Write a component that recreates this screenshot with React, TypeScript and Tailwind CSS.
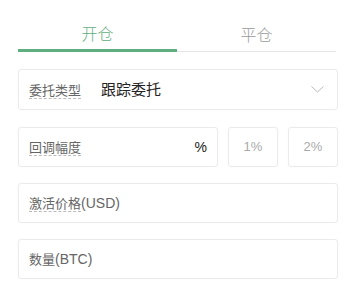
import React from "react";

const Label = ({ text }: { text: string }) => (
  <span className="inline-block text-[13px] leading-[17px] text-[#666] border-b border-dashed border-[#bbb]">
    {text}
  </span>
);

export default function App() {
  return (
    <div className="w-[346px] h-[284px] bg-white font-['Noto_Sans_CJK_SC','Noto_Sans',sans-serif] overflow-hidden">
      <div className="ml-[18px] w-[320px]">
        <div className="flex items-end w-[318px]">
          <div className="flex-1 pt-[21px] pb-[4px] border-b-[3px] border-[#5fae80] text-center text-[16px] leading-[24px] font-light text-[#5fae80]">
            开仓
          </div>
          <div className="flex-1 pt-[21px] pb-[5px] border-b border-[#e6e6e6] text-center text-[16px] leading-[24px] font-light text-[#999]">
            平仓
          </div>
        </div>

        <div className="mt-[17px] h-[41px] rounded-[3px] border border-[#ebebeb] shadow-[0_0_2px_rgba(0,0,0,0.04)] flex items-center pl-[10px] pr-[13px]">
          <Label text="委托类型" />
          <span className="ml-[20px] text-[15px] leading-[18px] text-[#222] pb-[1px]">跟踪委托</span>
          <svg className="ml-auto" width="13" height="7" viewBox="0 0 13 7" fill="none">
            <path d="M0.5 0.5L6.5 6L12.5 0.5" stroke="#bbb" strokeWidth="1" />
          </svg>
        </div>

        <div className="mt-[17px] flex gap-[10px] h-[40px]">
          <div className="w-[200px] rounded-[3px] border border-[#ebebeb] shadow-[0_0_2px_rgba(0,0,0,0.04)] flex items-center pl-[10px] pr-[10px]">
            <Label text="回调幅度" />
            <span className="ml-auto text-[14px] text-[#222] font-['Liberation_Sans',sans-serif]">%</span>
          </div>
          <div className="w-[50px] rounded-[3px] border border-[#ebebeb] shadow-[0_0_2px_rgba(0,0,0,0.04)] flex items-center justify-center text-[13px] text-[#aaa] font-['Liberation_Sans',sans-serif]">
            1%
          </div>
          <div className="w-[50px] rounded-[3px] border border-[#ebebeb] shadow-[0_0_2px_rgba(0,0,0,0.04)] flex items-center justify-center text-[13px] text-[#aaa] font-['Liberation_Sans',sans-serif]">
            2%
          </div>
        </div>

        <div className="mt-[16px] h-[40px] rounded-[3px] border border-[#ebebeb] shadow-[0_0_2px_rgba(0,0,0,0.04)] flex items-center pl-[10px]">
          <span className="text-[13px] leading-[17px] text-[#666]">
            <span className="inline-block border-b border-dashed border-[#bbb]">激活价格</span>
            <span className="font-['Liberation_Sans',sans-serif] text-[14px]">(USD)</span>
          </span>
        </div>

        <div className="mt-[16px] h-[40px] rounded-[3px] border border-[#ebebeb] shadow-[0_0_2px_rgba(0,0,0,0.04)] flex items-center pl-[10px]">
          <span className="text-[13px] leading-[17px] text-[#666]">
            数量<span className="font-['Liberation_Sans',sans-serif] text-[14px]">(BTC)</span>
          </span>
        </div>
      </div>
    </div>
  );
}
